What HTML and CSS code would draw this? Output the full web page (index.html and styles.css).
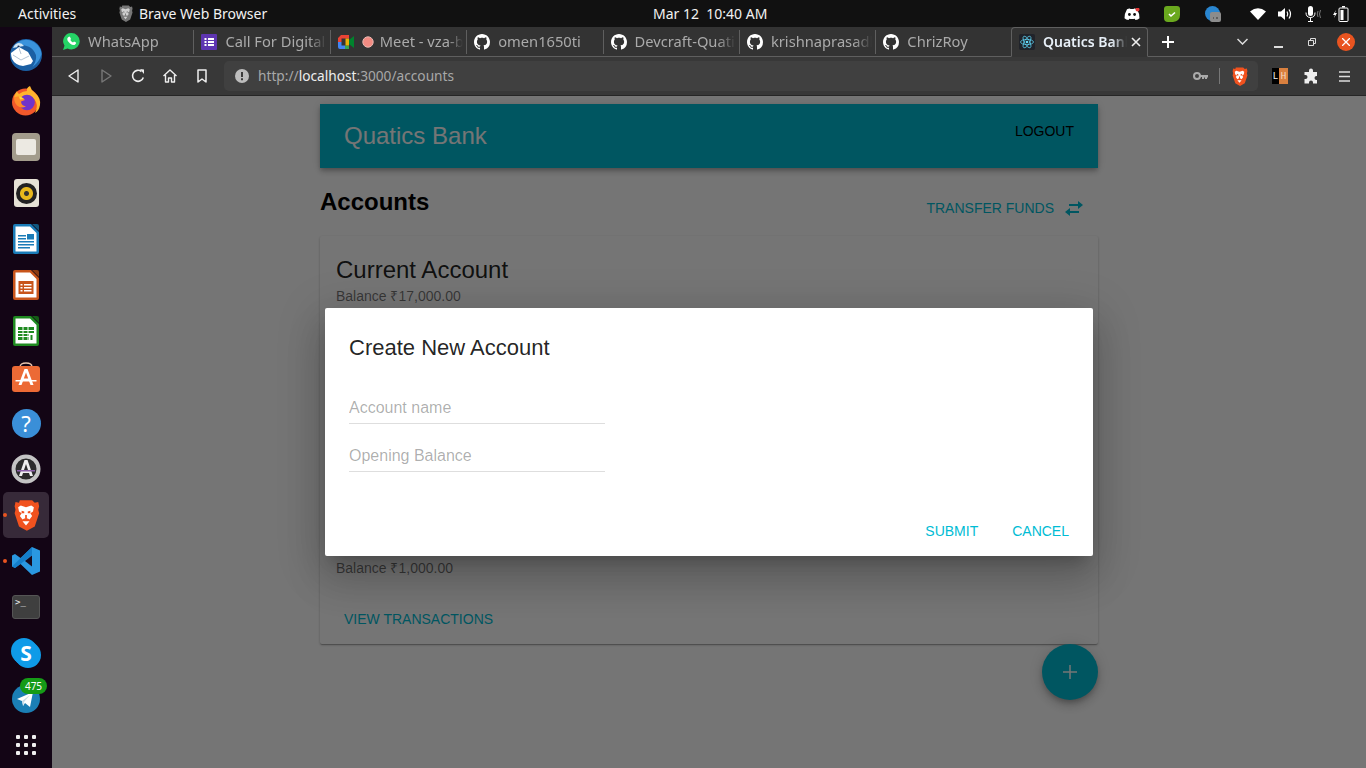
FILE: index.html
```html
<!DOCTYPE html>
<html lang="en">
<head>
<meta charset="utf-8">
<title>Quatics Bank</title>
<link rel="stylesheet" href="styles.css">
</head>
<body>
<svg class="defs" width="0" height="0" aria-hidden="true">
  <symbol id="gh" viewBox="0 0 16 16"><path fill="#fff" d="M8 0C3.58 0 0 3.58 0 8c0 3.54 2.29 6.53 5.47 7.59.4.07.55-.17.55-.38 0-.19-.01-.82-.01-1.49-2.01.37-2.53-.49-2.69-.94-.09-.23-.48-.94-.82-1.13-.28-.15-.68-.52-.01-.53.63-.01 1.08.58 1.23.82.72 1.21 1.87.87 2.33.66.07-.52.28-.87.51-1.07-1.78-.2-3.64-.89-3.64-3.95 0-.87.31-1.59.82-2.15-.08-.2-.36-1.02.08-2.12 0 0 .67-.21 2.2.82.64-.18 1.32-.27 2-.27.68 0 1.36.09 2 .27 1.53-1.04 2.2-.82 2.2-.82.44 1.1.16 1.92.08 2.12.51.56.82 1.27.82 2.15 0 3.07-1.87 3.75-3.65 3.95.29.25.54.73.54 1.48 0 1.07-.01 1.93-.01 2.2 0 .21.15.46.55.38A8.013 8.013 0 0016 8c0-4.42-3.58-8-8-8z"/></symbol>
  <symbol id="lion" viewBox="0 0 32 36"><path style="fill:var(--lion-bg,#f1521f)" d="M9 1h14l3 3 4-1 1 5-1 4 1 4-5 15-9 5-9-5L3 16l1-4-1-4 1-5 4 1z"/><path style="fill:var(--lion-face,#fff)" d="M10 7l6 2 6-2 3 2-1 5-3 2 2 3-3 4-2-1h-4l-2 1-3-4 2-3-3-2-1-5zM12 25h8l-4 5z"/><path style="fill:var(--lion-bg,#f1521f)" d="M11 13l3 1v2h-3zM21 13l-3 1v2h3zM15 18h2v5h-2z"/></symbol>
</svg>

<header class="topbar">
  <span class="activities">Activities</span>
  <span class="appname">
    <svg class="appname-icon" width="15" height="17"><use href="#lion"/></svg>
    Brave Web Browser
  </span>
  <span class="clock">Mar 12&nbsp;&nbsp;10:40 AM</span>
  <div class="tray">
    <svg class="t-discord" width="16" height="12" viewBox="0 0 16 12"><path fill="#fff" d="M3 1.200Q5 .2 6 .5L6.300 1h3.400l.3-.5q1 -.3 3 .7 2.500 4 2.500 9-1.500 1.500-4 1.800l-.8-1.300q-2.700.8-5.400 0l-.8 1.300q-2.500-.3-4-1.800 0-5 2.500-9z"/><circle cx="5.400" cy="6.500" r="1.400" fill="#111"/><circle cx="10.600" cy="6.500" r="1.400" fill="#111"/><circle cx="13.500" cy="1.500" r="2" fill="#e53b3b"/></svg>
    <svg class="t-shield" width="16" height="16" viewBox="0 0 16 16"><path fill="#6aa81e" d="M3 0h10q3 0 3 3v6q0 6-7 7H4q-4 0-4-4V3q0-3 3-3z"/><path fill="none" stroke="#fff" stroke-width="1.600" d="M5 8l2 2 4-3.500"/></svg>
    <svg class="t-blue" width="16" height="16" viewBox="0 0 16 16"><circle cx="7.500" cy="7.500" r="7.500" fill="#2a86d0"/><rect x="5" y="6" width="11" height="10" rx="2" fill="#8c8c8c"/><path stroke="#333" d="M8 12h1M11 12h2"/></svg>
    <svg class="t-wifi" width="16" height="12" viewBox="0 0 16 12"><path fill="#fff" d="M0 3.500Q8-3 16 3.500L8 12z"/></svg>
    <svg class="t-vol" width="15" height="14" viewBox="0 0 15 14"><path fill="#fff" d="M0 4.500h3L7 1v12L3 9.500H0z"/><path fill="none" stroke="#fff" stroke-width="1.200" d="M9 4.500q1.500 2.500 0 5M11 2.500q3 4.500 0 9"/></svg>
    <svg class="t-mic" width="17" height="16" viewBox="0 0 17 16"><rect x="3" y="0" width="5" height="10" rx="2.500" fill="#fff"/><path fill="none" stroke="#fff" d="M1 6.500q0 5 4.500 5t4.500-5M5.500 11.500V15.500M3 15.500h5"/><path fill="none" stroke="#777" d="M13 5q-1.500 3 0 6M15.500 4q-2 4 0 8"/></svg>
    <svg class="t-batt" width="16" height="16" viewBox="0 0 16 16"><path fill="#fff" d="M3 4L0 9h2l-1 3 3-5H2zM9 0h3v1.500H9z"/><rect x="6" y="2" width="9" height="13.500" rx="1" fill="none" stroke="#fff"/><rect x="7.500" y="4" width="3" height="10" fill="#fff"/></svg>
  </div>
</header>

<div class="desktop">
  <nav class="dock">
    <div class="dock-item"><svg width="32" height="32" viewBox="0 0 32 32"><circle cx="16" cy="16" r="16" fill="#1b5fa3"/><path fill="#3a93dc" d="M7 4Q15-2 24 3q7 5 7.500 12-2 8-9 13 6-9 2-15-3-5-8-6-5-1.500-9.500-3z"/><path fill="#cfe6f5" d="M3 9q2-5 6-5 3 0 5 3l-6 1z"/><circle cx="8.500" cy="7.500" r="1.100" fill="#13315c"/><path fill="#fff" d="M1 14l8-6 9 5 5 9-2 3-8 2q-8-1-11-7-1-3-1-6z"/><path fill="none" stroke="#9eb2c8" stroke-width=".8" d="M3 16l8 5 8-4M9 9l2 6"/></svg></div>
    <div class="dock-item"><svg width="30" height="30" viewBox="0 0 30 30"><circle cx="14.500" cy="16" r="13.500" fill="#f2592b"/><path fill="#ffb52e" d="M19 0q1 4 5 7 6 5 5 12-1 6-5 8 3-6 1-11-3-7-10-6-4 0-6 2-3 1-6-1 1-3 3-6 .5 2 2 3 4-3 8-3-1-3 3-5z"/><circle cx="16" cy="16.500" r="7.800" fill="#7034cb"/><path fill="#ff8a2a" d="M3 11q7-2 11 3l-4 1.500q0 4 5 5-5 2.500-9-1-3-3-3-8.500z"/><path fill="#ffd83a" d="M8 10.500q3 0 5 2.500l-4 .5z"/></svg></div>
    <div class="dock-item"><div class="files"><div class="folder"></div></div></div>
    <div class="dock-item"><div class="rhythm"><div class="speaker"></div></div></div>
    <div class="dock-item">
      <svg width="26" height="30" viewBox="0 0 26 30"><path fill="#1a7cb8" d="M2 0h16l8 8v20q0 2-2 2H2q-2 0-2-2V2q0-2 2-2z"/><path fill="#fff" d="M2.500 2.500H17L23.500 9v18.500h-21z"/><path fill="#11577f" d="M19 0h5q2 0 2 2v5z"/><path fill="#1a7cb8" d="M5 11h8v1.500H5zM5 14h8v1.500H5zM5 17h16v1.500H5zM5 20h16v1.500H5zM5 23h12v1.500H5zM14 10h7v5.500h-7z"/></svg>
    </div>
    <div class="dock-item">
      <svg width="26" height="30" viewBox="0 0 26 30"><path fill="#c8551b" d="M2 0h16l8 8v20q0 2-2 2H2q-2 0-2-2V2q0-2 2-2z"/><path fill="#fff" d="M2.500 2.500H17L23.500 9v18.500h-21z"/><path fill="#8a3a12" d="M19 0h5q2 0 2 2v5z"/><rect x="5.500" y="11" width="15" height="13" fill="#c8551b"/><path fill="#fff" d="M7.500 14h2v1.500h-2zM11 14h7.500v1.500H11zM7.500 17h2v1.500h-2zM11 17h7.500v1.500H11zM7.500 20h2v1.500h-2zM11 20h7.500v1.500H11z"/></svg>
    </div>
    <div class="dock-item">
      <svg width="26" height="30" viewBox="0 0 26 30"><path fill="#1f8a20" d="M2 0h16l8 8v20q0 2-2 2H2q-2 0-2-2V2q0-2 2-2z"/><path fill="#fff" d="M2.500 2.500H17L23.500 9v18.500h-21z"/><path fill="#145c15" d="M19 0h5q2 0 2 2v5z"/><path fill="#1f8a20" d="M5 11h16v13H5z"/><path stroke="#fff" d="M5 14.500h16M5 17.500h16M5 20.500h16M10 11v13M15 11v13"/><rect x="16" y="18" width="5" height="6" fill="#fff"/><rect x="17.500" y="19" width="2" height="5" fill="#1f8a20"/></svg>
    </div>
    <div class="dock-item">
      <svg width="28" height="30" viewBox="0 0 28 30"><path fill="none" stroke="#e9c4ac" stroke-width="1.300" d="M8 5q0-4 6-4t6 4"/><rect y="4" width="28" height="26" rx="3" fill="#ec6a35"/><path fill="#fff" d="M12.500 7h3L21.500 23h-3l-1.500-4h-6l-1.500 4h-3zM11.800 16.500h4.400L14 10.500z"/><path fill="#fff" d="M3.500 18h21v1.500h-21z"/></svg>
    </div>
    <div class="dock-item"><div class="help">?</div></div>
    <div class="dock-item">
      <svg width="30" height="30" viewBox="0 0 30 30"><circle cx="15" cy="15" r="12.500" fill="#2c2c2c" stroke="#c4c4c4" stroke-width="4"/><path fill="#eee" d="M13.500 6h3L22 22h-3l-1-3h-6l-1 3H8zM13 16h4l-2-6z"/><path fill="#8b5fa8" d="M6 16h18v1.500H6z"/></svg>
    </div>
    <div class="dock-item active">
      <span class="run-dot"></span>
      <svg width="28" height="32"><use href="#lion"/></svg>
    </div>
    <div class="dock-item">
      <span class="run-dot"></span>
      <svg width="28" height="28" viewBox="0 0 28 28"><path fill="#2a98e0" d="M20 0l8 3.500v21L20 28 8.500 17 3 21l-3-1.500v-11L3 7l5.500 4z"/><path fill="#0f78c4" d="M20 0v8L8.500 17 3 21l-3-1.500L20 0z" opacity=".8"/><path fill="#190a1c" d="M20 8.500v11L13 14z"/></svg>
    </div>
    <div class="dock-item"><div class="term"><span class="prompt">&gt;_</span></div></div>
    <div class="dock-item"><div class="skype">S</div></div>
    <div class="dock-item">
      <svg width="28" height="28" viewBox="0 0 28 28"><circle cx="14" cy="14" r="14" fill="#1b7fb5"/><path fill="#fff" d="M5 14l16-7-3 15-5-4-2 3-1-5z"/><path fill="#c9dbe6" d="M10 16l8-6-6 7-.5 4z"/></svg>
      <span class="badge">475</span>
    </div>
    <div class="dock-item">
      <div class="grid9"><i></i><i></i><i></i><i></i><i></i><i></i><i></i><i></i><i></i></div>
    </div>
  </nav>

  <div class="browser">
    <div class="tabstrip">
      <div class="tab first">
        <svg class="fav" width="17" height="17" viewBox="0 0 17 17"><path fill="#25d366" d="M8.500 0a8.200 8.200 0 0 1 0 16.500q-2 0-4-1L0 17l1.500-4.300A8.200 8.200 0 0 1 8.500 0z"/><path fill="#fff" d="M5.500 4q1-.8 1.500 0l1 2-.7 1q1 1.700 2.700 2.500l1-.9 2 1q.5 1.500-1.500 2.400-2 .4-4.500-1.500Q4 8 4.200 6q.3-1.300 1.300-2z"/></svg>
        <span class="tab-label">WhatsApp</span>
      </div>
      <div class="tab">
        <svg class="fav" width="16" height="16" viewBox="0 0 16 16"><rect width="16" height="16" rx="1" fill="#5e35b1"/><path fill="#fff" d="M3.500 4h2v2h-2zM7 4h6v2H7zM3.500 7h2v2h-2zM7 7h6v2H7zM3.500 10h2v2h-2zM7 10h6v2H7z"/></svg>
        <span class="tab-label">Call For Digital</span>
      </div>
      <div class="tab">
        <svg class="fav" width="16" height="14" viewBox="0 0 16 14"><path fill="#ea4335" d="M3 0h8v3.500H3.500V7H0V3z"/><path fill="#4285f4" d="M0 7h3.500v3.500H7V14H2q-2 0-2-2z"/><path fill="#34a853" d="M7 10.500h4V14H7z"/><path fill="#fbbc04" d="M7.500 3.500H11V10.500H7.500z" opacity=".9"/><path fill="#00832d" d="M11 5l5-4v12l-5-4z"/></svg>
        <svg class="rec" width="12" height="12" viewBox="0 0 12 12"><circle cx="6" cy="6" r="5.200" fill="#f28b82" stroke="#e8b8b2"/></svg>
        <span class="tab-label">Meet - vza-b</span>
      </div>
      <div class="tab"><svg class="fav" width="16" height="16"><use href="#gh"/></svg><span class="tab-label">omen1650ti</span></div>
      <div class="tab"><svg class="fav" width="16" height="16"><use href="#gh"/></svg><span class="tab-label">Devcraft-Quatics</span></div>
      <div class="tab"><svg class="fav" width="16" height="16"><use href="#gh"/></svg><span class="tab-label">krishnaprasadk</span></div>
      <div class="tab no-sep"><svg class="fav" width="16" height="16"><use href="#gh"/></svg><span class="tab-label">ChrizRoy</span></div>
      <div class="tab current">
        <svg class="fav" width="16" height="16" viewBox="0 0 16 16"><rect width="16" height="16" rx="2" fill="#20232a"/><g fill="none" stroke="#61dafb" stroke-width=".7"><ellipse cx="8" cy="8" rx="6.500" ry="2.600"/><ellipse cx="8" cy="8" rx="6.500" ry="2.600" transform="rotate(60 8 8)"/><ellipse cx="8" cy="8" rx="6.500" ry="2.600" transform="rotate(120 8 8)"/></g><circle cx="8" cy="8" r="1.300" fill="#61dafb"/></svg>
        <span class="tab-label">Quatics Bank</span>
        <svg class="tab-close" width="10" height="10" viewBox="0 0 10 10"><path stroke="#eee" stroke-width="1.600" d="M1 1l8 8M9 1L1 9"/></svg>
      </div>
      <svg class="newtab" width="12" height="12" viewBox="0 0 12 12"><path stroke="#fff" stroke-width="2" d="M6 0v12M0 6h12"/></svg>
      <svg class="tabmenu" width="11" height="7" viewBox="0 0 11 7"><path fill="none" stroke="#ddd" stroke-width="1.500" d="M.5 1l5 5 5-5"/></svg>
      <svg class="win-min" width="9" height="2" viewBox="0 0 9 2"><path stroke="#ddd" stroke-width="2" d="M0 1h9"/></svg>
      <svg class="win-max" width="8" height="8" viewBox="0 0 8 8"><path fill="none" stroke="#ddd" d="M.5 2.500h5v5h-5zM2.500 2.500v-2h5v5h-2"/></svg>
      <span class="win-close"><svg width="8" height="8" viewBox="0 0 8 8"><path stroke="#fff" stroke-width="1.300" d="M0 0l8 8M8 0L0 8"/></svg></span>
    </div>

    <div class="toolbar">
      <svg class="tb-icon" width="16" height="16" viewBox="0 0 16 16"><path fill="none" stroke="#eee" stroke-width="1.400" stroke-linejoin="round" d="M12 2v12L3 8z"/></svg>
      <svg class="tb-icon" width="16" height="16" viewBox="0 0 16 16"><path fill="none" stroke="#777" stroke-width="1.400" stroke-linejoin="round" d="M4 2v12l9-6z"/></svg>
      <svg class="tb-icon" width="16" height="16" viewBox="0 0 16 16"><path fill="none" stroke="#eee" stroke-width="1.600" d="M13.300 9.500A5.500 5.500 0 1 1 11.500 3.500"/><path fill="#eee" d="M10 1l4 .5V6z"/></svg>
      <svg class="tb-icon" width="16" height="16" viewBox="0 0 16 16"><path fill="none" stroke="#eee" stroke-width="1.400" stroke-linejoin="round" d="M1.500 8L8 2l6.500 6M3.500 7v7h3v-4h3v4h3V7"/></svg>
      <svg class="tb-icon" width="16" height="16" viewBox="0 0 16 16"><path fill="none" stroke="#eee" stroke-width="1.500" stroke-linejoin="round" d="M4 2h8v12l-4-3-4 3z"/></svg>
      <div class="urlbar">
        <svg class="url-info" width="14" height="14" viewBox="0 0 14 14"><circle cx="7" cy="7" r="7" fill="#bdbdbd"/><path fill="#3c3c3c" d="M6 3h2v5H6zM6 9.200h2v2H6z"/></svg>
        <span class="url"><span class="dim">http://</span>localhost<span class="dim">:3000/accounts</span></span>
        <svg class="url-key" width="15" height="8" viewBox="0 0 15 8"><circle cx="4" cy="4" r="3" fill="none" stroke="#aaa" stroke-width="2"/><path fill="#aaa" d="M7 3h8v2.500h-1V7h-2V5.500h-1V7H9V5H7z"/></svg>
        <span class="url-sep"></span>
        <svg class="url-lion" width="17" height="19"><use href="#lion"/></svg>
      </div>
      <div class="lh"><span class="lh-l">L</span><span class="lh-h">H</span></div>
      <svg class="puzzle" width="16" height="16" viewBox="0 0 16 16"><path fill="#eee" d="M5 2.500a2 2 0 0 1 4 0V4h4v4h-.5a2 2 0 0 0 0 4h.5v3.500H9v-1a2 2 0 0 0-4 0v1H0.500V11h1a2 2 0 0 0 0-4h-1V4H5z"/></svg>
      <svg class="burger" width="11" height="11" viewBox="0 0 11 11"><path stroke="#ddd" stroke-width="1.500" d="M0 1h11M0 5.500h11M0 10h11"/></svg>
    </div>

    <div class="viewport">
      <main class="app">
        <div class="appbar">
          <span class="brand">Quatics Bank</span>
          <span class="logout">LOGOUT</span>
        </div>
        <div class="head-row">
          <h1 class="page-title">Accounts</h1>
          <span class="transfer">TRANSFER FUNDS
            <svg width="18" height="15" viewBox="0 0 18 15"><path fill="#00bcd4" d="M13 0l5 4-5 4V5H4V3h9zM5 7v3h9v2H5v3L0 11z"/></svg>
          </span>
        </div>
        <section class="card">
          <h2 class="acct-name">Current Account</h2>
          <p class="balance">Balance ₹17,000.00</p>
          <div class="hidden-rows"></div>
          <p class="balance">Balance ₹1,000.00</p>
          <span class="view-link">VIEW TRANSACTIONS</span>
        </section>
        <div class="fab-row">
          <span class="fab"><svg width="14" height="14" viewBox="0 0 14 14"><path stroke="#fff" stroke-width="1.500" d="M7 0v14M0 7h14"/></svg></span>
        </div>
      </main>
      <div class="overlay">
        <div class="dialog">
          <h2 class="dialog-title">Create New Account</h2>
          <div class="fields">
            <input class="field" type="text" placeholder="Account name">
            <input class="field" type="text" placeholder="Opening Balance">
          </div>
          <div class="actions">
            <span class="action">SUBMIT</span>
            <span class="action">CANCEL</span>
          </div>
        </div>
      </div>
    </div>
  </div>
</div>
</body>
</html>
```
FILE: styles.css
```css
* { box-sizing: border-box; }
html, body { margin: 0; height: 100%; overflow: hidden; }
body { display: flex; flex-direction: column; width: 1366px; height: 768px; font-family: "Noto Sans", "Open Sans", sans-serif; background: #333; }
.defs { position: absolute; }

/* top bar */
.topbar { height: 27px; flex: none; background: #111; color: #f2f2f2; font-size: 14px; display: flex; align-items: center; padding-left: 18px; }
.activities { width: 100px; }
.appname { display: flex; align-items: center; gap: 6px; width: 535px; }
.appname-icon { --lion-bg: #777; --lion-face: #d0d0d0; }
.clock { width: 114px; white-space: nowrap; }
.tray { margin-left: auto; display: flex; align-items: center; }
.t-discord { margin-right: 24px; }
.t-shield { margin-right: 25px; }
.t-blue { margin-right: 29px; }
.t-wifi { margin-right: 12px; }
.t-vol { margin-right: 12px; }
.t-mic { margin-right: 11px; }
.t-batt { margin-right: 17px; }

.desktop { flex: 1; display: flex; min-height: 0; }

/* dock */
.dock { width: 52px; flex: none; background: #130515; padding-top: 5px; display: flex; flex-direction: column; align-items: center; }
.dock-item { width: 46px; height: 46px; flex: none; display: flex; align-items: center; justify-content: center; position: relative; }
.dock-item.active { background: #372a39; border-radius: 5px; }
.run-dot { position: absolute; left: 0; top: 21px; width: 4px; height: 4px; border-radius: 50%; background: #e95420; }
.files { width: 28px; height: 28px; border-radius: 4px; background: #a39c8c; display: flex; align-items: center; justify-content: center; }
.folder { width: 20px; height: 16px; border-radius: 2px; background: #ece9e2; }
.rhythm { width: 25px; height: 28px; border-radius: 3px; background: #e6e2d6; display: flex; align-items: center; justify-content: center; }
.speaker { width: 21px; height: 21px; border-radius: 50%; background: radial-gradient(circle, #333 0 2px, #e8b81c 3px 6px, #222 7px); }
.help { width: 29px; height: 29px; border-radius: 50%; background: #3a8fd8; color: #fff; font-size: 22px; line-height: 29px; text-align: center; }
.term { width: 28px; height: 24px; border-radius: 3px; background: #3f3f3f; border: 1px solid #555; color: #eee; font: 9px/10px "DejaVu Sans Mono", monospace; padding: 1px 2px; }
.skype { width: 26px; height: 26px; border-radius: 50%; background: #0f9be8; color: #fff; font-size: 21px; font-weight: 700; line-height: 26px; text-align: center; box-shadow: -2px -2px 0 #0f9be8, 2px 2px 0 #0f9be8; }
.badge { position: absolute; left: 17px; top: 2px; width: 27px; height: 16px; border-radius: 8px; background: #169b17; color: #fff; font-size: 10px; line-height: 16px; text-align: center; }
.grid9 { display: grid; grid-template-columns: repeat(3, 4px); gap: 4px; }
.grid9 i { width: 4px; height: 4px; background: #eee; border-radius: 1px; }

/* browser */
.browser { flex: 1; min-width: 0; display: flex; flex-direction: column; }
.tabstrip { height: 30px; flex: none; background: #333; border-bottom: 1px solid #5f5f5f; display: flex; align-items: center; color: #aaa; font-size: 14.7px; padding-left: 3px; }
.tab { width: 136.4px; flex: none; display: flex; align-items: center; padding-left: 7px; padding-right: 3px; border-right: 1px solid #5f5f5f; height: 24px; overflow: hidden; }
.tab.first { width: 139.4px; padding-left: 8px; }
.tab.no-sep { width: 134.6px; border-right: none; }
.fav { flex: none; margin-right: 8px; }
.rec { flex: none; margin-right: 6px; }
.tab-label { flex: 1; min-width: 0; padding-bottom: 2px; white-space: nowrap; overflow: hidden; -webkit-mask-image: linear-gradient(to right, #000 82%, transparent 100%); mask-image: linear-gradient(to right, #000 82%, transparent 100%); }
.tab.current { height: 30px; margin-bottom: -1px; background: #333; border: 1px solid #5f5f5f; border-bottom: 1px solid #333; border-radius: 4px 4px 0 0; color: #e8f0f8; font-weight: 600; font-size: 14px; width: 137px; padding-right: 6px; }
.tab-close { flex: none; margin-left: 4px; }
.newtab { margin-left: 14px; flex: none; }
.tabmenu { margin-left: 63px; flex: none; }
.win-min { margin-left: 26px; flex: none; margin-top: 10px; }
.win-max { margin-left: 25px; flex: none; }
.win-close { margin-left: 21px; width: 18px; height: 18px; border-radius: 50%; background: #e95420; display: flex; align-items: center; justify-content: center; flex: none; }

.toolbar { height: 39px; flex: none; background: #383838; border-bottom: 1px solid #262626; display: flex; align-items: center; padding: 0 0 0 14px; }
.tb-icon { flex: none; margin-right: 16px; }
.urlbar { width: 1034px; height: 30px; margin-left: -2px; background: #404040; border-radius: 5px; display: flex; align-items: center; padding-left: 11px; flex: none; }
.url-info { flex: none; }
.url { font-size: 13.7px; color: #eee; margin-left: 9px; padding-bottom: 2px; white-space: nowrap; }
.dim { color: #a8a8a8; }
.url-key { margin-left: auto; flex: none; }
.url-sep { width: 1px; height: 16px; background: #777; margin: 0 11px; flex: none; }
.url-lion { flex: none; margin-right: 10px; }
.lh { display: flex; width: 16px; height: 16px; margin-left: 14px; font: 9px/16px "DejaVu Sans Mono", monospace; text-align: center; flex: none; }
.lh-l { width: 7px; background: #000; color: #eee; }
.lh-h { width: 9px; background: #d9803f; color: #f5d9c0; }
.puzzle { margin-left: 16px; flex: none; }
.burger { margin-left: 19px; flex: none; }

/* page */
.viewport { flex: 1; min-height: 0; position: relative; background: #fff; font-family: "Liberation Sans", Arial, sans-serif; overflow: hidden; }
.app { width: 778px; margin: 0 auto; padding-top: 8px; }
.appbar { height: 64px; background: #00bcd4; padding: 16px 24px 0; display: flex; justify-content: space-between; align-items: flex-start; box-shadow: 0 2px 4px -1px rgba(0,0,0,.2), 0 4px 5px rgba(0,0,0,.14), 0 1px 10px rgba(0,0,0,.12); }
.brand { font-size: 24px; line-height: 32px; color: #fff; }
.logout { font-size: 14px; line-height: 20px; margin-top: 1px; color: #000; }
.head-row { height: 68px; display: flex; justify-content: space-between; align-items: flex-start; padding-top: 20px; }
.page-title { margin: 0; font-size: 24px; line-height: 28px; font-weight: 700; color: #000; }
.transfer { display: flex; align-items: center; gap: 11px; color: #00bcd4; font-size: 14px; line-height: 20px; padding: 10px 15px 0 0; }
.card { height: 408px; background: #fff; border-radius: 2px; padding: 20px 16px 0; box-shadow: 0 1px 3px rgba(0,0,0,.2), 0 1px 1px rgba(0,0,0,.14), 0 2px 1px -1px rgba(0,0,0,.12); }
.acct-name { margin: 0; font-size: 24px; line-height: 28px; font-weight: 400; color: rgba(0,0,0,.87); }
.balance { margin: 2px 0 0; font-size: 14px; line-height: 20px; color: rgba(0,0,0,.54); }
.hidden-rows { height: 250px; }
.view-link { display: block; margin: 31px 0 0 8px; color: #00bcd4; font-size: 14px; line-height: 20px; }
.fab-row { display: flex; justify-content: flex-end; }
.fab { width: 56px; height: 56px; border-radius: 50%; background: #00bcd4; display: flex; align-items: center; justify-content: center; box-shadow: 0 3px 5px -1px rgba(0,0,0,.2), 0 6px 10px rgba(0,0,0,.14), 0 1px 18px rgba(0,0,0,.12); }

.overlay { position: absolute; inset: 0; background: rgba(0,0,0,.54); display: flex; align-items: center; justify-content: center; }
.dialog { width: 768px; height: 248px; background: #fff; border-radius: 2px; display: flex; flex-direction: column; padding: 24px 24px 0; box-shadow: 0 11px 15px -7px rgba(0,0,0,.2), 0 24px 38px 3px rgba(0,0,0,.14), 0 9px 46px 8px rgba(0,0,0,.12); }
.dialog-title { margin: 0; font-size: 22px; line-height: 31px; font-weight: 400; color: rgba(0,0,0,.87); }
.fields { display: flex; flex-direction: column; gap: 16px; margin-top: 29px; }
.field { width: 256px; height: 32px; border: 0; border-bottom: 1px solid rgba(0,0,0,.13); padding: 0; background: none; font: 16px "Liberation Sans", Arial, sans-serif; outline: none; }
.field::placeholder { color: rgba(0,0,0,.32); opacity: 1; }
.actions { margin-top: auto; margin-bottom: 16px; display: flex; justify-content: flex-end; gap: 34px; color: #00bcd4; font-size: 14px; line-height: 18px; }
```
